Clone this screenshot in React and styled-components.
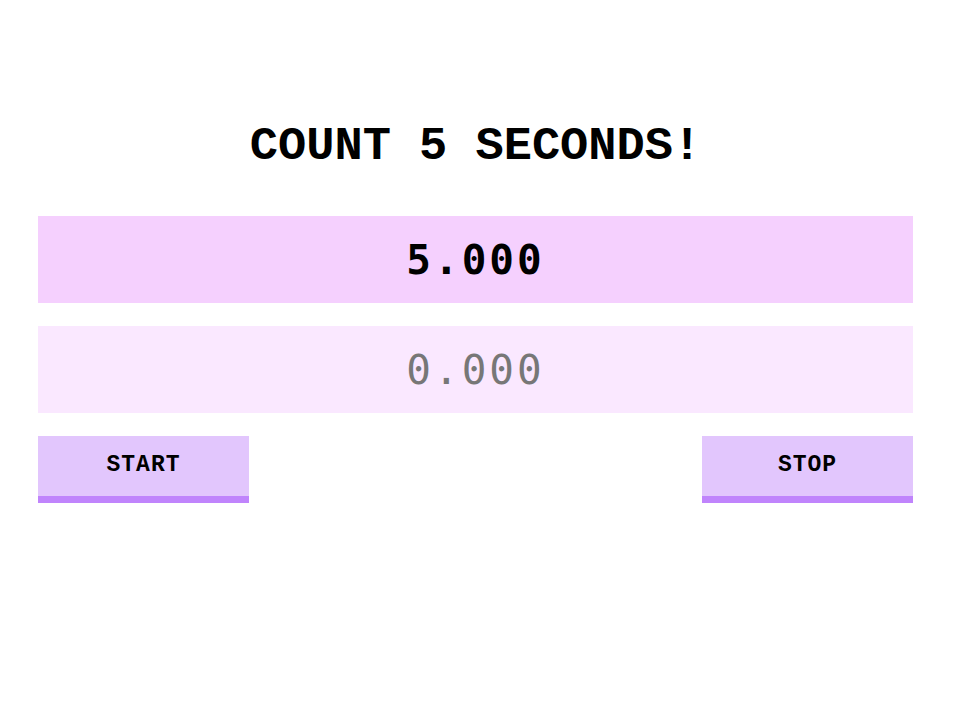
import React from "react"
import styled, { createGlobalStyle } from "styled-components"

const mono = `"Courier New", "Nimbus Mono PS", "FreeMono", Courier, "Liberation Mono", monospace`

const GlobalStyle = createGlobalStyle`
  body {
    margin: 0;
    background: #fff;
    font-family: ${mono};
  }
`

const Wrapper = styled.div`
  width: 875px;
  margin-left: 38px;
  padding-top: 121px;
`

const Title = styled.h1`
  margin: 0 0 43px;
  height: 52px;
  line-height: 52px;
  text-align: center;
  font-family: ${mono};
  font-size: 47px;
  font-weight: 700;
  color: #000;
`

const Display = styled.div`
  display: flex;
  align-items: center;
  justify-content: center;
  height: 87px;
  margin-bottom: 23px;
  background: ${props => (props.$dim ? "#fae8ff" : "#f5d0fe")};
  color: ${props => (props.$dim ? "#777777" : "#000000")};
  font-family: "DejaVu Sans Mono", monospace;
  font-size: 41px;
  font-weight: ${props => (props.$dim ? 400 : 700)};
  letter-spacing: 3px;
`

const Controls = styled.div`
  display: flex;
  justify-content: space-between;
`

const Button = styled.button`
  width: 211px;
  height: 67px;
  padding: 0 0 2px;
  border: none;
  border-bottom: 7px solid #c084fc;
  background: #e2c6fd;
  font-family: ${mono};
  font-size: 23px;
  font-weight: 700;
  letter-spacing: 1px;
  color: #000;
  cursor: pointer;
`

const App = () => {
  return (
    <>
      <GlobalStyle />
      <Wrapper>
        <Title>COUNT 5 SECONDS!</Title>
        <Display>5.000</Display>
        <Display $dim>0.000</Display>
        <Controls>
          <Button>START</Button>
          <Button>STOP</Button>
        </Controls>
      </Wrapper>
    </>
  )
}

export default App
